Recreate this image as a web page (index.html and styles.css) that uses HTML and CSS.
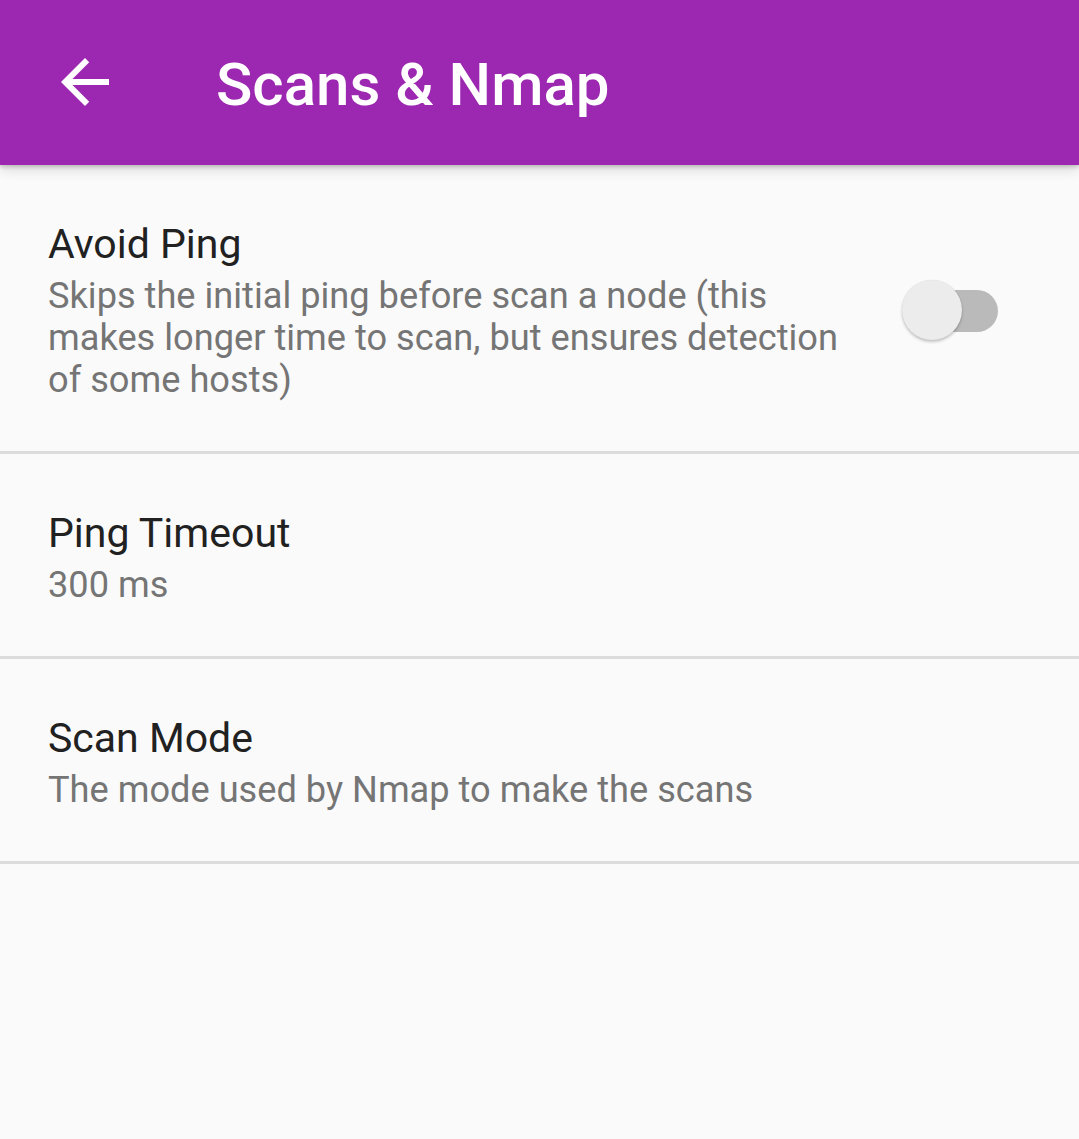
FILE: index.html
```
<!DOCTYPE html>
<html>
<head>
<meta charset="utf-8">
<link rel="stylesheet" href="styles.css">
</head>
<body>
<header class="appbar">
  <svg class="back" viewBox="0 0 24 24" width="72" height="72"><path fill="#fff" d="M20 11H7.83l5.59-5.59L12 4l-8 8 8 8 1.41-1.41L7.83 13H20v-2z"/></svg>
  <h1 class="appbar-title">Scans &amp; Nmap</h1>
</header>
<main class="prefs">
  <section class="pref pref-first">
    <div class="pref-text">
      <div class="pref-title">Avoid Ping</div>
      <div class="pref-summary">Skips the initial ping before scan a node (this makes longer time to scan, but ensures detection of some hosts)</div>
    </div>
    <div class="switch">
      <div class="track"></div>
      <div class="thumb"></div>
    </div>
  </section>
  <div class="divider"></div>
  <section class="pref">
    <div class="pref-text">
      <div class="pref-title">Ping Timeout</div>
      <div class="pref-summary">300 ms</div>
    </div>
  </section>
  <div class="divider"></div>
  <section class="pref">
    <div class="pref-text">
      <div class="pref-title">Scan Mode</div>
      <div class="pref-summary">The mode used by Nmap to make the scans</div>
    </div>
  </section>
  <div class="divider"></div>
</main>
</body>
</html>
```
FILE: styles.css
```
html, body {
  margin: 0;
  padding: 0;
  background: #fafafa;
  font-family: Roboto, "Noto Sans", sans-serif;
}
body {
  width: 1079px;
  height: 1139px;
  overflow: hidden;
}
.appbar {
  position: relative;
  z-index: 2;
  height: 165px;
  background: #9c27b0;
  display: flex;
  align-items: flex-start;
  box-shadow: 0 2px 4px rgba(0,0,0,0.18), 0 5px 12px rgba(0,0,0,0.12);
}
.back {
  display: block;
  margin: 46px 0 0 49px;
  flex: none;
}
.appbar-title {
  margin: 50px 0 0 95px;
  font-size: 60px;
  line-height: 70px;
  font-weight: 500;
  color: #fff;
  letter-spacing: 0;
}
.prefs {
  display: flex;
  flex-direction: column;
}
.pref {
  display: flex;
  align-items: center;
  padding: 54px 81px 50px 48px;
}
.pref-text {
  flex: 1;
  display: flex;
  flex-direction: column;
  gap: 6px;
}
.pref-first .pref-text {
  margin-right: 43px;
}
.pref-title {
  font-size: 41px;
  line-height: 50px;
  color: #212121;
}
.pref-summary {
  font-size: 36.2px;
  line-height: 42px;
  color: #757575;
}
.divider {
  height: 3px;
  background: #dcdcdc;
}
.switch {
  position: relative;
  width: 96px;
  height: 61px;
  flex: none;
}
.track {
  position: absolute;
  left: 10px;
  right: 0;
  top: 10px;
  height: 42px;
  border-radius: 21px;
  background: #bababa;
}
.thumb {
  position: absolute;
  left: 0;
  top: 0;
  width: 60px;
  height: 60px;
  border-radius: 50%;
  background: #ececec;
  box-shadow: 0 2px 3px rgba(0,0,0,0.22), 0 0 1px rgba(0,0,0,0.12);
}
```
